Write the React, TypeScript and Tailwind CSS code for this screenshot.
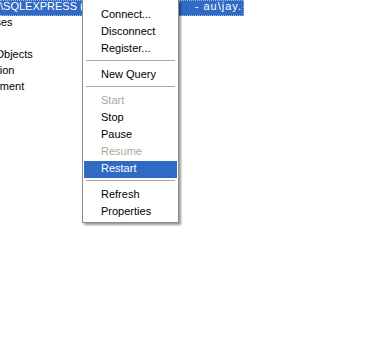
const TreeRow = ({ label }: { label: string }) => {
  return (
    <div className="h-4 leading-[13px] whitespace-nowrap -ml-[40px] text-black">
      {label}
    </div>
  );
};

const MenuItem = ({ label, disabled, active }: any) => {
  return (
    <div
      className={
        "h-[17px] leading-[15px] pl-[17px] whitespace-nowrap " +
        (active
          ? "bg-[#316ac5] text-white"
          : disabled
          ? "text-[#aca899]"
          : "text-black")
      }
    >
      {label}
    </div>
  );
};

const Separator = () => {
  return (
    <div className="h-[9px] pt-[2px] px-[2px]">
      <div className="h-px bg-[#a7a6aa]" />
    </div>
  );
};

export default function App() {
  return (
    <div
      className="relative w-[379px] h-[350px] bg-white overflow-hidden text-[11px]"
      style={{ fontFamily: "'Liberation Sans', Arial, sans-serif" }}
    >
      <div className="flex flex-col">
        <div className="h-4 flex">
          <div className="w-[244px] h-4 bg-[#316ac5] text-white leading-[13px] flex whitespace-nowrap overflow-hidden border border-dotted border-[#9fb6de] border-l-0 pr-[1px]">
            <span className="-mt-px flex-1 min-w-0 overflow-hidden">
              \SQLEXPRESS (SQL Server 9.0
            </span>
            <span className="-mt-px tracking-[1px]">- au\jay.</span>
          </div>
        </div>
        <TreeRow label="Databases" />
        <TreeRow label="Security" />
        <TreeRow label="Server Objects" />
        <TreeRow label="Replication" />
        <TreeRow label="Management" />
      </div>

      {/* context menu */}
      <div className="absolute left-[82px] top-0 w-[97px] h-[223px] bg-white border border-t-0 border-[#8d8d8d] pt-[7px] px-px shadow-[2px_2px_2px_rgba(0,0,0,0.4)]">
        <MenuItem label="Connect..." />
        <MenuItem label="Disconnect" />
        <MenuItem label="Register..." />
        <Separator />
        <MenuItem label="New Query" />
        <Separator />
        <MenuItem label="Start" disabled />
        <MenuItem label="Stop" />
        <MenuItem label="Pause" />
        <MenuItem label="Resume" disabled />
        <MenuItem label="Restart" active />
        <Separator />
        <MenuItem label="Refresh" />
        <MenuItem label="Properties" />
      </div>
    </div>
  );
}
